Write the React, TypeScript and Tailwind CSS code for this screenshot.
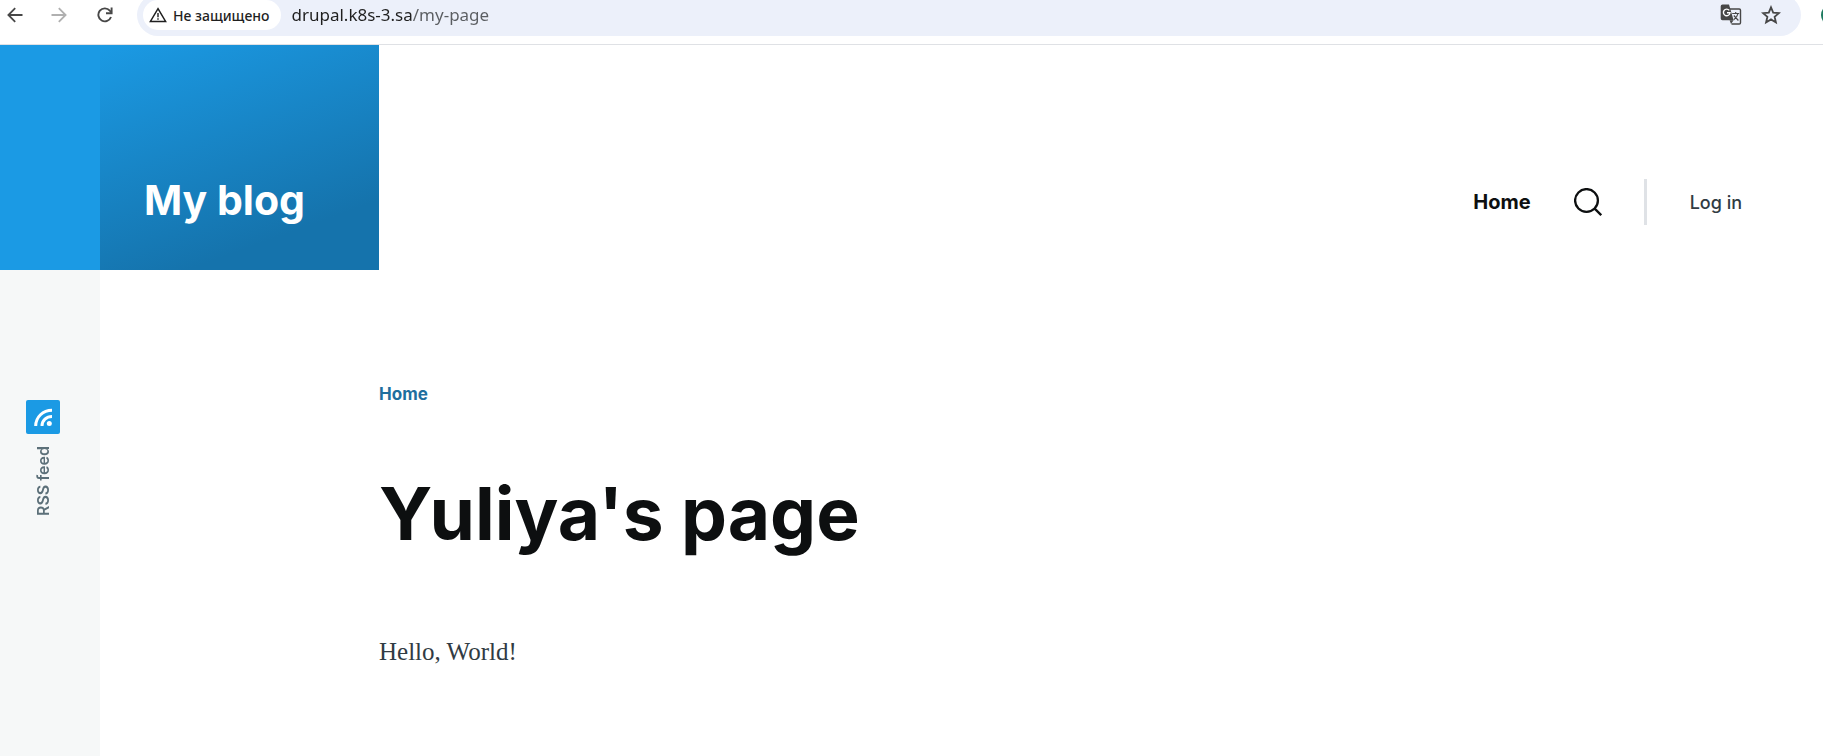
import React from "react";

function BackIcon() {
  return (
    <svg width="16" height="16" viewBox="0 0 16 16" fill="none" stroke="currentColor" strokeWidth="1.8" aria-hidden="true">
      <path d="M15.5 8H2M8.2 1.2 1.4 8l6.8 6.8" />
    </svg>
  );
}

function ForwardIcon() {
  return (
    <svg width="16" height="16" viewBox="0 0 16 16" fill="none" stroke="currentColor" strokeWidth="1.8" aria-hidden="true">
      <path d="M.5 8H14M7.8 1.2 14.6 8l-6.8 6.8" />
    </svg>
  );
}

function ReloadIcon() {
  return (
    <svg width="16" height="16" viewBox="0 0 16 16" fill="none" stroke="currentColor" strokeWidth="1.9" aria-hidden="true">
      <path d="M14 10A6.5 6.5 0 1 1 12.8 3.6L14.6 5.6" />
      <path d="M14.6.4V6.2H9" />
    </svg>
  );
}

function WarningIcon() {
  return (
    <svg width="18" height="16" viewBox="0 0 18 16" aria-hidden="true">
      <path d="M9 1.6 16.6 14.4H1.4Z" fill="none" stroke="currentColor" strokeWidth="1.5" />
      <path d="M8.3 6h1.4v4.2H8.3zM8.3 11.2h1.4v1.5H8.3z" fill="currentColor" />
    </svg>
  );
}

function TranslateIcon() {
  return (
    <svg width="22" height="22" viewBox="0 0 22 22" aria-hidden="true">
      <path d="M9 5h10.2c.8 0 1.3.5 1.3 1.3v12.4c0 .8-.5 1.3-1.3 1.3H11.5" fill="none" stroke="#474747" strokeWidth="1.4" />
      <path d="M2.5.5H9l4.600 15.800H2.500a1.800 1.800 0 0 1-1.800-1.800V2.300A1.800 1.800 0 0 1 2.500.5Z" fill="#474747" />
      <path d="M9.600 16.300h4L11 20Z" fill="#474747" />
      <path d="M9.300 6.400A3.300 3.300 0 1 0 10 8.800H7" fill="none" stroke="#fff" strokeWidth="1.4" />
      <path d="M12.200 9.500h7M15.700 8v1.500M18 9.500c-.5 2.500-2 4.500-4.300 6.300M13.800 11.500l4.600 5" fill="none" stroke="#474747" strokeWidth="1.2" />
    </svg>
  );
}

function StarIcon() {
  return (
    <svg width="20" height="20" viewBox="0 0 20 20" aria-hidden="true">
      <path d="m10 2.300 2.200 5.300 5.700.5-4.300 3.700 1.300 5.600-4.900-3-4.900 3 1.300-5.600L2.100 8.100l5.700-.5Z" fill="none" stroke="#474747" strokeWidth="1.8" />
    </svg>
  );
}

function SearchIcon() {
  return (
    <svg width="28" height="28" viewBox="0 0 28 28" fill="none" stroke="#0d0f10" strokeWidth="2.3" aria-hidden="true">
      <circle cx="12.5" cy="12.5" r="11.4" />
      <path d="m20.400 20.400 6.800 6.800" />
    </svg>
  );
}

function RssIcon() {
  return (
    <svg width="34" height="34" viewBox="0 0 34 34" aria-hidden="true">
      <rect width="34" height="34" rx="2" fill="#1b9ae4" />
      <g fill="none" stroke="#fff" strokeWidth="3">
        <path d="M9.700 26C9.700 17 17 10.200 26 10.200" />
        <path d="M16 26c0-5.500 4.500-9.500 10-9.500" />
      </g>
      <circle cx="23.300" cy="23.500" r="2.500" fill="#fff" />
    </svg>
  );
}

function Toolbar() {
  return (
    <div className="flex h-[45px] items-start overflow-hidden border-b border-[#dfe1e5] bg-white font-['Noto_Sans',sans-serif]">
      <div className="flex h-[30px] items-center gap-7 pl-[7px] text-[#474747]">
        <button type="button" aria-label="Back"><BackIcon /></button>
        <button type="button" aria-label="Forward" className="text-[#b0b0b0]"><ForwardIcon /></button>
        <button type="button" aria-label="Reload" className="ml-0.5"><ReloadIcon /></button>
      </div>
      <div className="-mt-1.5 ml-6 flex h-[42px] flex-1 items-center rounded-full bg-[#ecf0fa] pl-1.5 pr-5">
        <button type="button" className="flex h-[30px] items-center gap-1.5 rounded-full bg-white pl-1.5 pr-3 text-[14px] font-medium text-[#1f1f1f]">
          <WarningIcon />
          Не защищено
        </button>
        <input
          aria-label="Address"
          defaultValue="drupal.k8s-3.sa/my-page"
          className="ml-2.5 min-w-0 flex-1 bg-linear-to-r from-[#1f1f1f] from-[121px] to-[#5a5d61] to-[121px] bg-clip-text text-[17px] text-transparent caret-black outline-none"
        />
        <button type="button" aria-label="Translate this page"><TranslateIcon /></button>
        <button type="button" aria-label="Bookmark this page" className="ml-[19px]"><StarIcon /></button>
      </div>
      <button type="button" aria-label="Profile" className="-mr-5 ml-5 mt-1 size-[22px] shrink-0 rounded-full bg-[#1d7a5f]" />
    </div>
  );
}

export default function App() {
  return (
    <div className="flex min-h-screen flex-col bg-white font-['Inter',sans-serif]">
      <Toolbar />
      <header className="flex h-[225px] items-stretch">
        <div className="w-[100px] shrink-0 bg-[#1b9ae4]" />
        <div className="flex w-[279px] shrink-0 items-end bg-[linear-gradient(160deg,#1b9ae4_0%,#1573ac_78.66%)] pb-[45px] pl-[44px]">
          <a href="#" className="text-[41px] leading-[50px] font-bold whitespace-nowrap text-white">My blog</a>
        </div>
        <nav aria-label="Main" className="flex flex-1 items-end justify-end pr-[81px] pb-[45px]">
          <div className="flex h-[46px] items-center">
            <a href="#" className="text-[20px] font-bold text-[#0d0f10]">Home</a>
            <button type="button" aria-label="Search" className="ml-[43px]"><SearchIcon /></button>
            <span className="ml-[42px] h-[46px] w-[3px] bg-[#dfe2e6]" />
            <a href="#" className="ml-[43px] text-[18px] font-medium text-[#313b43]">Log in</a>
          </div>
        </nav>
      </header>
      <div className="flex flex-1">
        <aside className="w-[100px] shrink-0 bg-[#f6f8f8] pt-[130px] pl-[26px]">
          <a href="#" className="flex w-[34px] flex-col items-center gap-3 text-[#5c7079]">
            <RssIcon />
            <span className="rotate-180 text-[16px] leading-5 font-semibold [writing-mode:vertical-rl]">RSS feed</span>
          </a>
        </aside>
        <main className="flex-1 pt-[112px] pl-[279px]">
          <nav aria-label="Breadcrumb">
            <a href="#" className="text-[17px] leading-6 font-bold text-[#1e6e9e]">Home</a>
          </nav>
          <h1 className="mt-[63px] text-[73px] leading-[90px] font-bold text-[#0d0f10]">Yuliya's page</h1>
          <p className="mt-[75px] font-['Liberation_Serif',serif] text-[25px] leading-9 text-[#313b43]">Hello, World!</p>
        </main>
      </div>
    </div>
  );
}
